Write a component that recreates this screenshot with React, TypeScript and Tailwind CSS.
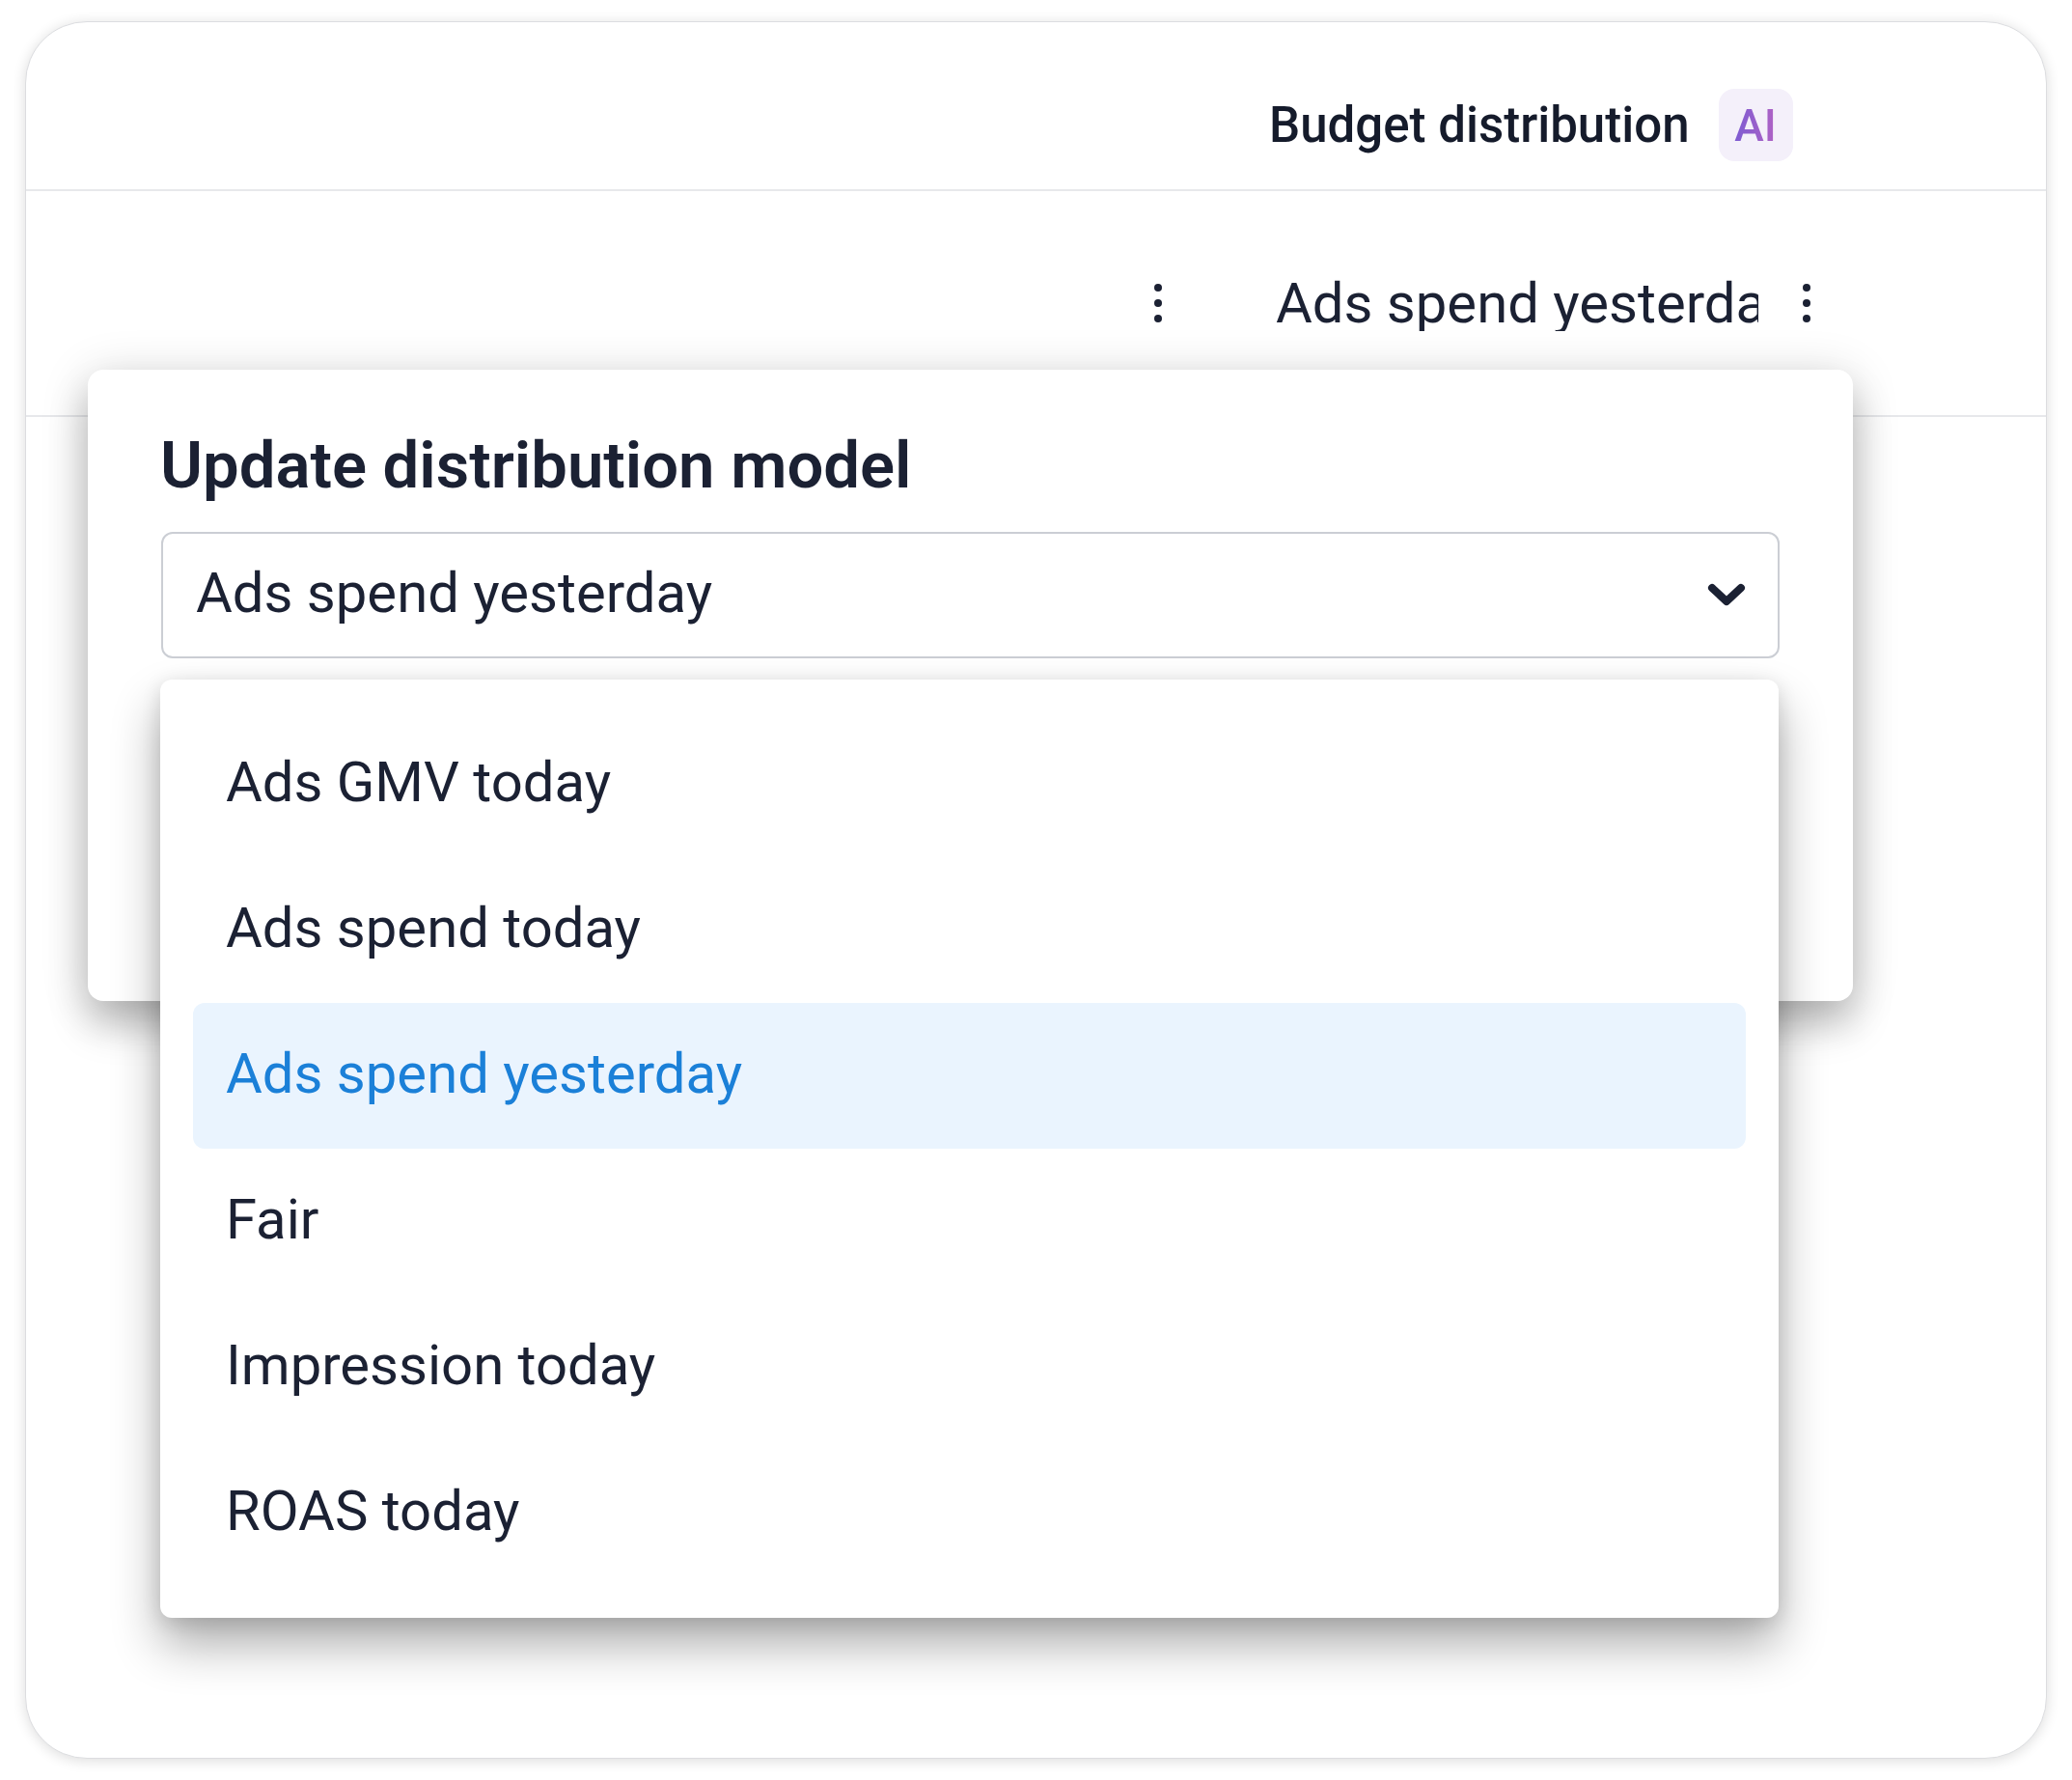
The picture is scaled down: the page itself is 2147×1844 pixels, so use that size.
import React from "react";

function Kebab() {
  return (
    <svg width="10" height="42" viewBox="0 0 10 42" className="shrink-0">
      <circle cx="5" cy="5" r="4" fill="#1b2133" />
      <circle cx="5" cy="21" r="4" fill="#1b2133" />
      <circle cx="5" cy="37" r="4" fill="#1b2133" />
    </svg>
  );
}

const items = [
  "Ads GMV today",
  "Ads spend today",
  "Ads spend yesterday",
  "Fair",
  "Impression today",
  "ROAS today",
];

export default function App() {
  return (
    <div
      className="min-h-[1844px] w-[2147px] bg-white pl-[26px] pt-[22px]"
      style={{ fontFamily: "Roboto, 'Liberation Sans', sans-serif" }}
    >
      <div className="relative h-[1800px] w-[2095px] overflow-hidden rounded-[64px] border border-[#dcdde0] bg-white shadow-[0_2px_14px_rgba(0,0,0,0.14)]">
        {/* header */}
        <div className="flex h-[175px] items-center border-b-2 border-[#e7e8eb] pt-[40px]">
          <div className="w-[1288px] shrink-0" />
          <span className="text-[51px] font-medium leading-none text-[#151b2b]">
            Budget distribution
          </span>
          <div className="ml-[30px] flex h-[75px] w-[77px] items-center justify-center rounded-[16px] bg-[#f4f0fa]">
            <span className="bg-linear-to-r from-[#7d5bd2] to-[#b062c4] bg-clip-text text-[46px] font-medium leading-none text-transparent">
              AI
            </span>
          </div>
        </div>
        {/* row */}
        <div className="flex h-[234px] items-center border-b-2 border-[#e7e8eb]">
          <div className="w-[1168px] shrink-0" />
          <Kebab />
          <div className="ml-[117px] w-[500px] overflow-hidden whitespace-nowrap text-[58px] leading-none text-[#1b2133]">
            Ads spend yesterday
          </div>
          <div className="ml-[45px]">
            <Kebab />
          </div>
        </div>

        {/* popover */}
        <div className="absolute left-[64px] top-[360px] h-[654px] w-[1829px] rounded-[16px] bg-white px-[76px] pt-[66px] shadow-[0_6px_50px_rgba(0,0,0,0.16),0_26px_40px_rgba(0,0,0,0.22)]">
          <div className="ml-[-1px] text-[67px] font-semibold leading-none text-[#1b2133]">
            Update distribution model
          </div>
          <div className="mt-[35px] flex h-[131px] items-center justify-between rounded-[12px] border-2 border-[#cbced4] pb-[5px] pl-[34px] pr-[33px]">
            <span className="text-[58px] leading-none text-[#1b2133]">
              Ads spend yesterday
            </span>
            <svg width="40" height="26" viewBox="0 0 40 26" className="mt-[5px]">
              <path
                d="M5 5 L20 19 L35 5"
                fill="none"
                stroke="#1b2133"
                strokeWidth="8"
                strokeLinecap="round"
                strokeLinejoin="round"
              />
            </svg>
          </div>
        </div>

        {/* dropdown list */}
        <div className="absolute left-[139px] top-[681px] flex w-[1677px] flex-col rounded-[12px] bg-white px-[34px] py-[33px] shadow-[0_4px_20px_rgba(0,0,0,0.12),0_28px_50px_rgba(0,0,0,0.32)]">
          {items.map((it) => {
            const sel = it === "Ads spend yesterday";
            return (
              <div
                key={it}
                className={
                  sel
                    ? "flex h-[151px] items-center rounded-[12px] bg-[#eaf4fe] pb-[5px] pl-[34px] text-[58px] leading-none text-[#1b80d8]"
                    : "flex h-[151px] items-center rounded-[12px] pb-[5px] pl-[34px] text-[58px] leading-none text-[#1b2133]"
                }
              >
                {it}
              </div>
            );
          })}
        </div>
      </div>
    </div>
  );
}
